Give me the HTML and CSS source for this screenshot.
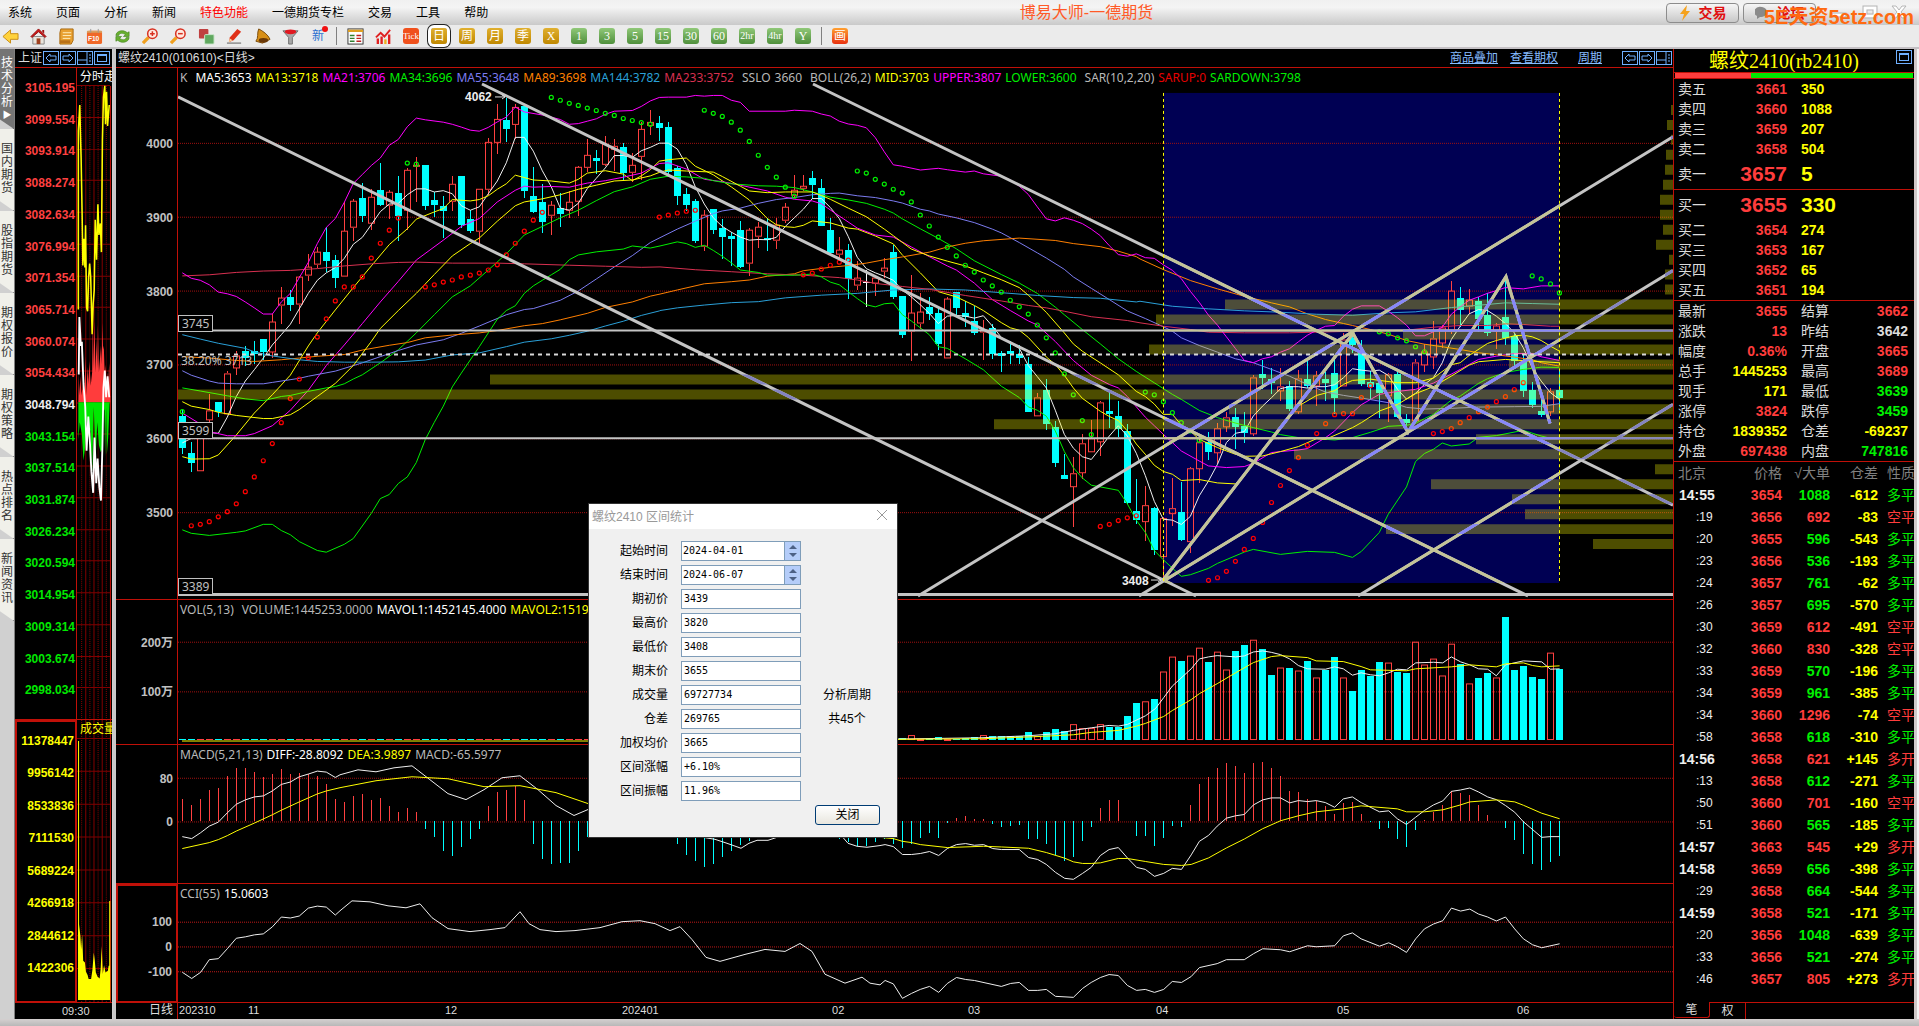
FILE: index.html
```html
<!DOCTYPE html>
<html lang="zh-CN">
<head>
<meta charset="utf-8">
<title>博易大师-一德期货</title>
<link rel="stylesheet" href="styles.css">
</head>
<body>
<header class="menubar">
  <nav class="menus">
    <button>系统</button><button>页面</button><button>分析</button><button>新闻</button><button class="hot">特色功能</button><button>一德期货专栏</button><button>交易</button><button>工具</button><button>帮助</button>
  </nav>
  <h1 class="app-title">博易大师-一德期货</h1>
  <div class="head-actions">
    <button class="pill"><svg width="12" height="16" viewBox="0 0 12 16"><path d="M8 0L1 9h4L3 16l8-10H7z" fill="#f5a21c"/></svg>交易</button>
    <button class="pill"><svg width="14" height="14" viewBox="0 0 14 14"><path d="M7 1a6 5 0 1 1-2 10l-3 2v-3a6 5 0 0 1 5-9z" fill="#8a8a8a"/></svg>论坛</button>
    <svg class="win" width="84" height="20" viewBox="0 0 84 20" fill="none" stroke="#fff" stroke-width="3"><path d="M5 12h12"/><rect x="37" y="5" width="10" height="8"/><path d="M66 3l10 11M76 3L66 14"/><g stroke="#b5b5b5" stroke-width="1"><rect x="4" y="10" width="14" height="4"/><rect x="35" y="3" width="14" height="12"/><rect x="39" y="7" width="6" height="4"/><path d="M64 3h4l3 4 3-4h4l-5 6 5 6h-4l-3-4-3 4h-4l5-6z"/></g></svg>
    <span class="mark">5E天资5etz.com</span>
  </div>
</header>

<div class="toolbar">
  <button aria-label="返回"><svg viewBox="0 0 18 18"><path d="M1 9l8-7v4h8v6H9v4z" fill="#ffd23c" stroke="#c88a10"/></svg></button>
  <button aria-label="主页"><svg viewBox="0 0 18 18"><path d="M3 9h12v8H3z" fill="#e8e4dc" stroke="#888"/><path d="M1 9l8-8 8 8-1 1-7-6-7 6z" fill="#d01818" stroke="#901010"/><path d="M13 2h2v4l-2-2z" fill="#a01010"/><path d="M7 11h4v6H7z" fill="#a04020"/></svg></button>
  <button aria-label="资讯"><svg viewBox="0 0 18 18"><path d="M3 1h13v12l-2 4H2V5z" fill="#e8a030" stroke="#a86810"/><path d="M5 5h9M5 8h9M5 11h8" stroke="#fff0c0"/><path d="M2 13h11v3H2z" fill="#b87018"/></svg></button>
  <button aria-label="F10"><svg viewBox="0 0 18 18"><rect x="1" y="3" width="16" height="14" rx="2" fill="#f06828"/><path d="M1 5h16V3H1z" fill="#d8a060"/><path d="M5 1v4M13 1v4" stroke="#999"/><text x="2" y="14" class="f10">F10</text></svg></button>
  <button aria-label="刷新"><svg viewBox="0 0 18 18"><path d="M2 8c0-5 8-7 12-3l2-1v5h-6l2-2C9 5 6 5 5 8zM16 10c0 5-8 7-12 3l-2 1V9h6l-2 2c3 2 6 2 7-1z" fill="#68b030" stroke="#3c7c18" stroke-width=".6"/></svg></button>
  <button aria-label="放大"><svg viewBox="0 0 18 18"><path d="M7 10l-6 6" stroke="#f0a020" stroke-width="3.5"/><circle cx="11" cy="6" r="5" fill="#ffe8e0" stroke="#d83020" stroke-width="1.6"/><path d="M8.500 6h5M11 3.500v5" stroke="#d83020" stroke-width="1.6"/></svg></button>
  <button aria-label="缩小"><svg viewBox="0 0 18 18"><path d="M7 10l-6 6" stroke="#f0a020" stroke-width="3.5"/><circle cx="11" cy="6" r="5" fill="#ffe8e0" stroke="#d83020" stroke-width="1.6"/><path d="M8.500 6h5" stroke="#d83020" stroke-width="1.6"/></svg></button>
  <button aria-label="叠加"><svg viewBox="0 0 18 18"><rect x="1" y="1" width="10" height="10" rx="1" fill="#c04040"/><rect x="7" y="7" width="10" height="10" rx="1" fill="#60a860" stroke="#cfe8cf"/></svg></button>
  <button aria-label="画线"><svg viewBox="0 0 18 18"><path d="M3 15l1-5 8-9 4 3-8 9z" fill="#e03018"/><path d="M3 15l1-4 3 2z" fill="#f8d8a0"/><path d="M1 16h15" stroke="#888" stroke-width="1.5"/></svg></button>
  <button aria-label="预警"><svg viewBox="0 0 18 18"><path d="M5 1c4 2 10 6 12 11l-8 4-7-2c3-3 1-9 3-13z" fill="#d89018" stroke="#784808"/><ellipse cx="10" cy="13" rx="5" ry="2.500" fill="#6a3808"/></svg></button>
  <button aria-label="筛选"><svg viewBox="0 0 18 18"><path d="M1 3h16l-6 7v7H7v-7z" fill="#a8a8a8" stroke="#707070"/><ellipse cx="9" cy="4" rx="6" ry="2.500" fill="#e01820"/></svg></button>
  <button class="new" aria-label="新功能">新<i></i></button>
  <span class="sep"></span>
  <button aria-label="报价"><svg viewBox="0 0 18 18"><rect x="1" y="1" width="16" height="16" fill="#fff" stroke="#333"/><path d="M1 3h16" stroke="#e0a020" stroke-width="2.500"/><path d="M3 8h5M3 11h5M3 14h5" stroke="#308030" stroke-width="1.500"/><path d="M10 8h5M10 11h5M10 14h5" stroke="#c02020" stroke-width="1.500"/></svg></button>
  <button aria-label="走势"><svg viewBox="0 0 18 18"><path d="M3 11v6M7 9v8M15 7v10" stroke="#e02020" stroke-width="2.500"/><path d="M11 12v5" stroke="#f0b020" stroke-width="2.500"/><path d="M1 10l5-5 4 4 6-7" fill="none" stroke="#e02020" stroke-width="2"/></svg></button>
  <button class="per tick">Tick</button>
  <button class="per gold on">日</button><button class="per gold">周</button><button class="per gold">月</button><button class="per gold">季</button><button class="per gold">X</button>
  <button class="per green">1</button><button class="per green">3</button><button class="per green">5</button><button class="per green">15</button><button class="per green">30</button><button class="per green">60</button><button class="per green hr">2hr</button><button class="per green hr">4hr</button><button class="per green">Y</button>
  <span class="sep"></span>
  <button class="per draw">画</button>
</div>

<div class="workspace">
  <nav class="tabs">
    <a href="#" class="on">技术分析<small>▶</small></a><a href="#">国内期货</a><a href="#">股指期货</a><a href="#">期权报价</a><a href="#">期权策略</a><a href="#">热点排名</a><a href="#">新闻资讯</a>
  </nav>

  <section class="side">
    <div class="titlebar"><span class="name">上证</span><span class="boxes" data-boxes="lrsm"></span></div>
    <div class="side-grid">
      <div class="axis" data-axis="index"></div>
      <div class="pane" id="index"><span class="cut">分时走</span></div>
      <div class="axis framed yellow" data-axis="indexvol"></div>
      <div class="pane" id="indexvol"><span class="cut yellow">成交量</span></div>
    </div>
    <div class="side-time">09:30</div>
  </section>

  <main class="main">
    <div class="titlebar"><span>螺纹2410(010610)&lt;日线&gt;</span>
      <span class="links"><a href="#">商品叠加</a><a href="#">查看期权</a><a href="#" class="far">周期</a></span><span class="boxes" data-boxes="lrs"></span></div>
    <div class="grid">
      <div class="axis" data-axis="price"></div>
      <div class="pane" id="price"><p class="legend"><span class="wide">K</span><b class="w">MA5:3653</b><b class="y">MA13:3718</b><b class="m">MA21:3706</b><b class="g">MA34:3696</b><b class="s">MA55:3648</b><b class="o">MA89:3698</b><b class="u">MA144:3782</b><b class="c wide">MA233:3752</b><span>SSLO</span><span class="wide">3660</span><span>BOLL(26,2)</span><b class="y">MID:3703</b><b class="m">UPPER:3807</b><b class="g wide">LOWER:3600</b><span>SAR(10,2,20)</span><b class="r">SARUP:0</b><b class="g">SARDOWN:3798</b></p></div>
      <div class="axis" data-axis="vol"></div>
      <div class="pane" id="vol"><p class="legend"><span class="wide">VOL(5,13)</span><span>VOLUME:1445253.0000</span><b class="w">MAVOL1:1452145.4000</b><b class="y">MAVOL2:1519318.3846</b></p></div>
      <div class="axis" data-axis="macd"></div>
      <div class="pane" id="macd"><p class="legend"><span>MACD(5,21,13)</span><b class="w">DIFF:-28.8092</b><b class="y">DEA:3.9897</b><span>MACD:-65.5977</span></p></div>
      <div class="axis framed" data-axis="cci"></div>
      <div class="pane" id="cci"><p class="legend"><span>CCI(55)</span><b class="w">15.0603</b></p></div>
      <div class="kind">日线</div>
      <div class="dates" id="dates"></div>
    </div>
  </main>

  <aside class="quote">
    <h2>螺纹2410(rb2410)<span class="boxes" data-boxes="m"></span></h2>
    <div class="ratio"><i></i></div>
    <table class="book"><tbody>
      <tr><th>卖五</th><td class="r">3661</td><td class="y">350</td></tr>
      <tr><th>卖四</th><td class="r">3660</td><td class="y">1088</td></tr>
      <tr><th>卖三</th><td class="r">3659</td><td class="y">207</td></tr>
      <tr><th>卖二</th><td class="r">3658</td><td class="y">504</td></tr>
      <tr class="big"><th>卖一</th><td class="r">3657</td><td class="y">5</td></tr>
    </tbody></table>
    <table class="book"><tbody>
      <tr class="big"><th>买一</th><td class="r">3655</td><td class="y">330</td></tr>
      <tr><th>买二</th><td class="r">3654</td><td class="y">274</td></tr>
      <tr><th>买三</th><td class="r">3653</td><td class="y">167</td></tr>
      <tr><th>买四</th><td class="r">3652</td><td class="y">65</td></tr>
      <tr><th>买五</th><td class="r">3651</td><td class="y">194</td></tr>
    </tbody></table>
    <table class="stats"><tbody>
      <tr><th>最新</th><td class="r">3655</td><th>结算</th><td class="r">3662</td></tr>
      <tr><th>涨跌</th><td class="r">13</td><th>昨结</th><td>3642</td></tr>
      <tr><th>幅度</th><td class="r">0.36%</td><th>开盘</th><td class="r">3665</td></tr>
      <tr><th>总手</th><td class="y">1445253</td><th>最高</th><td class="r">3689</td></tr>
      <tr><th>现手</th><td class="y">171</td><th>最低</th><td class="g">3639</td></tr>
      <tr><th>涨停</th><td class="r">3824</td><th>跌停</th><td class="g">3459</td></tr>
      <tr><th>持仓</th><td class="y">1839352</td><th>仓差</th><td class="y">-69237</td></tr>
      <tr><th>外盘</th><td class="r">697438</td><th>内盘</th><td class="g">747816</td></tr>
    </tbody></table>
    <table class="trades"><thead><tr><th>北京</th><th>价格</th><th>√大单</th><th>仓差</th><th>性质</th></tr></thead><tbody id="trades"></tbody></table>
    <div class="foot-tabs"><button class="on">笔</button><button>权</button></div>
  </aside>
  <div class="edge"></div>

  <form class="dialog" role="dialog" aria-label="螺纹2410 区间统计">
    <div class="dlg-title">螺纹2410 区间统计<button type="button" class="x" aria-label="退出"><svg width="12" height="12" viewBox="0 0 12 12"><path d="M1 1l10 10M11 1L1 11" stroke="#999"/></svg></button></div>
    <div class="dlg-body">
      <div class="fields">
        <label for="f0">起始时间</label><span class="spin"><input id="f0" value="2024-04-01"><button type="button" aria-label="调整起始时间"><svg width="8" height="14" viewBox="0 0 8 14"><path d="M0 5l4-4 4 4zM0 9l4 4 4-4z" fill="#4d6185"/></svg></button></span>
        <label for="f1">结束时间</label><span class="spin"><input id="f1" value="2024-06-07"><button type="button" aria-label="调整结束时间"><svg width="8" height="14" viewBox="0 0 8 14"><path d="M0 5l4-4 4 4zM0 9l4 4 4-4z" fill="#4d6185"/></svg></button></span>
        <label for="f2">期初价</label><input id="f2" value="3439">
        <label for="f3">最高价</label><input id="f3" value="3820">
        <label for="f4">最低价</label><input id="f4" value="3408">
        <label for="f5">期末价</label><input id="f5" value="3655">
        <label for="f6">成交量</label><input id="f6" value="69727734">
        <label for="f7">仓差</label><input id="f7" value="269765">
        <label for="f8">加权均价</label><input id="f8" value="3665">
        <label for="f9">区间涨幅</label><input id="f9" value="+6.10%">
        <label for="f10">区间振幅</label><input id="f10" value="11.96%">
      </div>
      <div class="period"><p>分析周期</p><p>共45个</p><button type="button">关闭</button></div>
    </div>
  </form>
</div>
<footer class="status"></footer>
<script src="charts.js"></script>
</body>
</html>
```
FILE: styles.css
```css
* { box-sizing: border-box; }
body { margin: 0; height: 100vh; min-height: 700px; display: flex; flex-direction: column; overflow: hidden; background: #cfcfcf; font: 12px/16px "Liberation Sans", "Noto Sans CJK SC", sans-serif; color: #000; }
button { font: inherit; color: inherit; background: none; border: 0; padding: 0; margin: 0; }
p, h1, h2 { margin: 0; font-weight: normal; }
table { border-collapse: collapse; width: 100%; table-layout: fixed; }
th, td { padding: 0; font-weight: normal; }

.menubar { height: 25px; flex: none; display: flex; align-items: center; padding: 0 5px 0 8px; background: linear-gradient(#f0f0f0, #f4f4f4 30%, #c9c9c9); }
.menus { display: flex; gap: 24px; flex: 4; }
.hot { color: #f00; }
.app-title { font-size: 16px; line-height: 24px; color: #ff5a28; }
.head-actions { flex: 3; position: relative; display: flex; justify-content: flex-end; align-items: center; gap: 4px; padding-right: 2px; }
.pill { width: 73px; height: 20px; border: 1px solid #8c8c8c; border-radius: 4px; background: linear-gradient(#f6f6f6, #c8c8c8); color: #e01010; font-weight: bold; font-size: 14px; display: flex; align-items: center; justify-content: center; gap: 8px; }
.win { margin-left: 8px; }
.mark { position: absolute; right: 0; top: 2px; font-size: 20px; line-height: 24px; font-weight: bold; color: #ff6a10; }

.toolbar { height: 24px; flex: none; display: flex; align-items: center; gap: 8px; background: #ebebeb; border-bottom: 2px solid #c4c0c4; }
.toolbar button { width: 20px; height: 20px; display: flex; align-items: center; justify-content: center; flex: none; }
.toolbar svg { width: 17px; height: 17px; }
.f10 { font: bold 7px "Liberation Sans", sans-serif; fill: #fff; }
.toolbar .new { position: relative; color: #2a6fd0; }
.new i { position: absolute; right: 0; top: 0; width: 6px; height: 6px; border-radius: 3px; background: #f01010; }
.sep { width: 1px; height: 18px; background: #808080; }
.toolbar .per { width: 16px; height: 16px; margin: 0 2px; border-radius: 3px; color: #fff; font: 12px/16px "Liberation Serif", "Noto Sans CJK SC", serif; }
.toolbar .gold { background: linear-gradient(#e0b030, #c08800); }
.toolbar .green { background: linear-gradient(#90c878, #4f8f3c); }
.toolbar .tick { background: #f0501c; font-size: 9px; }
.toolbar .draw { background: linear-gradient(#ffa030, #e83010); }
.toolbar .hr { font-size: 10px; }
.toolbar .on { box-shadow: 0 0 0 3px #fff, 0 0 0 4px #222; }

.workspace { flex: 1; min-height: 0; display: flex; position: relative; }
.tabs { width: 15px; flex: none; background: #d0d0d0; border-right: 1px solid #808080; display: flex; flex-direction: column; }
.tabs a { height: 82px; padding: 14px 1px 0; font-size: 12px; line-height: 13px; color: #333; text-decoration: none; word-break: break-all; background: #f0f0ea; border-bottom: 1px solid #666; clip-path: polygon(0 0, 100% 0, 100% 100%, 0 88%); }
.tabs .on { height: 80px; padding-top: 8px; background: #747474; color: #fff; }
.tabs small { display: block; font-size: 9px; text-align: center; }

.titlebar { height: 19px; flex: none; display: flex; align-items: center; border-bottom: 1px solid #c01008; color: #dcdcdc; overflow: hidden; white-space: nowrap; }
.boxes { display: flex; gap: 1px; }
.boxes svg { display: block; }
.side { width: 97px; flex: none; background: #000; display: flex; flex-direction: column; }
.side .titlebar { padding: 0 2px 0 3px; }
.side .boxes { flex: 1; justify-content: flex-end; }
.side-grid { flex: 1; min-height: 0; display: grid; grid-template: 652fr 283fr / 62px 1fr; }
.side-time { height: 16px; flex: none; padding-left: 47px; color: #ddd; font-size: 11px; }
.cut { padding: 1px 0 0 3px; overflow: hidden; white-space: nowrap; color: #fff; }

.main { flex: 1; min-width: 0; margin-left: 4px; background: #000; display: flex; flex-direction: column; box-shadow: -3px 0 0 #c8c8c8; }
.main .titlebar { padding: 0 1px 0 2px; }
.links { margin-left: auto; display: flex; gap: 12px; padding-right: 20px; }
.links a { color: #86bcff; }
.links .far { margin-left: 8px; }
.grid { flex: 1; min-height: 0; display: grid; grid-template: minmax(0, 532fr) minmax(0, 145fr) minmax(0, 139fr) minmax(0, 119fr) 16px / 62px 1fr; }
.axis, .pane { min-width: 0; min-height: 0; border-bottom: 1px solid #c01008; }
.axis { position: relative; border-right: 1px solid #c01008; color: #c0c0c0; font: bold 12px/16px "Liberation Sans", "Noto Sans CJK SC", sans-serif; }
.axis span { position: absolute; right: 4px; margin-top: -8px; }
.side .axis span { right: 1px; }
.side .axis { color: #ff4040; }
.axis.framed { border: 2px solid #c01008; }
.side .axis.yellow { color: #ff0; }
.axis .g { color: #00e800; }
.axis .w { color: #eee; }
.pane { position: relative; display: grid; }
.pane > * { grid-area: 1 / 1; min-width: 0; min-height: 0; }
.pane svg { width: 100%; height: 100%; display: block; overflow: hidden; }
.pane .legend, .pane .cut { z-index: 1; }
.side .cut.yellow { color: #ff0; }
.legend { display: flex; gap: 4px; padding: 2px 2px 0; height: 18px; white-space: nowrap; font: 12px/16px "Noto Sans", sans-serif; color: #b8b8b8; }
.legend b { font-weight: normal; }
.legend .wide { margin-right: 4px; }
.note { position: absolute; margin-top: -8px; font: 12px/16px "Noto Sans", sans-serif; color: #c0c0c0; z-index: 1; white-space: nowrap; }
.note.box { border: 1px solid #c0c0c0; background: #000; padding: 0 3px; line-height: 15px; margin-top: 0; }
.note.strong { font: bold 12px/16px "Liberation Sans", sans-serif; color: #eee; }
.kind { color: #ddd; text-align: right; padding-right: 4px; border-right: 1px solid #c01008; line-height: 15px; }
.dates { position: relative; color: #ddd; font-size: 11px; line-height: 15px; }
.dates span { position: absolute; }

.w { color: #fff; } .y { color: #ff0; } .m { color: #f0f; } .g { color: #00f000; } .r { color: #ff3c3c; }
.s { color: #7b7bf0; } .o { color: #ff8000; } .u { color: #2aa0d8; } .c { color: #d83050; }
.legend .r { color: #e80000; }

.quote { width: 241px; flex: none; background: #000; border-left: 1px solid #c01008; display: flex; flex-direction: column; color: #dcdcdc; }
.quote h2 { height: 23px; flex: none; display: flex; color: #ff0; font: 20px/25px "Liberation Serif", "Noto Sans CJK SC", serif; padding-left: 35px; }
.quote .boxes { margin: 1px 2px 0 auto; }
.ratio { height: 7px; flex: none; border: solid #c01008; border-width: 1px 0; padding: 0 1px; background: #000; }
.ratio i { display: block; height: 5px; background: linear-gradient(90deg, #ff3c3c 32%, #00e800 32%); }
.quote table { flex: none; border-bottom: 1px solid #c01008; font-size: 14px; line-height: 20px; }
.quote tr { height: 20px; }
.quote th { text-align: left; padding-left: 4px; }
.quote td { font-weight: bold; text-align: right; }
.book th { width: 48px; }
.book td:nth-child(2) { width: 65px; }
.book td:nth-child(3) { text-align: left; padding-left: 14px; }
.book .big { height: 30px; }
.book .big td { font-size: 21px; }
.stats th { width: 53px; }
.stats td { width: 60px; }
.stats th:nth-child(3) { padding-left: 14px; }
.stats td:last-child { width: 74px; padding-right: 6px; }
.quote .trades { border: 0; }
.quote .trades tr { height: 22px; }
.trades thead th { color: #808080; text-align: right; padding: 0; width: 48px; }
.trades thead th:first-child { text-align: left; padding-left: 4px; width: 60px; }
.trades thead th:last-child { width: 37px; }
.trades td:first-child { text-align: left; padding-left: 5px; color: #eee; }
.trades .sec td:first-child { font-weight: normal; font-size: 12px; padding-left: 22px; }
.trades td:last-child { font-weight: normal; }
.foot-tabs { margin-top: auto; height: 17px; flex: none; border-top: 1px solid #c01008; display: flex; }
.foot-tabs button { width: 36px; height: 16px; border-right: 1px solid #c01008; }
.foot-tabs .on { background: #000; margin-top: -1px; border-bottom: 1px solid #c01008; border-radius: 0 0 3px 3px; }
.edge { width: 5px; flex: none; background: linear-gradient(90deg, #cfc8c8 60%, #f4f4f4 60%); }

.dialog { position: absolute; left: 589px; top: 455px; width: 308px; background: #f0f0f0; z-index: 3; outline: 1px solid #333; }
.dlg-title { height: 25px; background: #fff; color: #999; padding: 0 9px 0 3px; display: flex; justify-content: space-between; align-items: center; }
.dlg-body { display: flex; align-items: flex-start; padding: 12px 16px 12px 18px; }
.fields { display: grid; grid-template-columns: 61px 120px; grid-auto-rows: 20px; gap: 4px 13px; align-items: center; text-align: right; }
.fields input { width: 120px; height: 20px; border: 1px solid #7f9db9; background: #fff; padding: 0 2px 2px; font: 10px/16px "DejaVu Sans Mono", monospace; color: #000; }
.spin { display: flex; width: 120px; border: 1px solid #7f9db9; }
.fields .spin input { flex: 1; width: 0; height: 18px; border: 0; padding: 0 1px 1px; }
.spin button { width: 16px; height: 18px; background: #b5cdf9; border-left: 1px solid #7f9db9; display: flex; align-items: center; justify-content: center; }
.period { flex: 1; display: flex; flex-direction: column; text-align: center; padding: 144px 0 0 14px; }
.period p { line-height: 24px; margin-top: -2px; padding-bottom: 2px; padding-right: 2px; }
.period button { height: 20px; width: 65px; margin-top: 72px; border: 1px solid #003c74; border-radius: 3px; background: linear-gradient(#fff, #e8e6de); }
.status { height: 7px; flex: none; background: linear-gradient(#d4d0d0, #b8b8b8); }
```
FILE: charts.js
```js
// Drawing units of the panes: x runs 178..1673, y runs 68..1003 from the price pane down to CCI.
const A = { x0: 170, y0: 70, kx: 3, ky: 2.904 };
const B = { x0: 660, y0: 70, kx: 3, ky: 2.904 };
const C = { x0: 1140, y0: 80, kx: 2.904, ky: 3 };
const L = { x0: 0, y0: 600, kx: 3, ky: 3 };
const R = { x0: 880, y0: 590, kx: 1.96, ky: 3 };
const P = { x0: 0, y0: 0, kx: 1, ky: 1 };
const T = { x0: 0, y0: 40, kx: 3, ky: 2.613 };
const RED = '#ff4040', CYAN = '#00ffff', FRAME = '#c01008';

const pairs = s => s.trim().split(/\s+/).map(p => p.split(',').map(Number));
const map = (f, s) => pairs(s).map(([x, y]) => [(f.x0 + x / f.kx).toFixed(1), (f.y0 + y / f.ky).toFixed(1)]);
const track = (...parts) => { let out = []; for (let i = 0; i < parts.length; i += 2) out = out.concat(map(parts[i], parts[i + 1])); return out.join(' '); };
const line = (color, pts, w = 1) => `<polyline points="${pts}" fill="none" stroke="${color}" stroke-width="${w}"/>`;
const seg = (x1, y1, x2, y2, color, extra = '') => `<path d="M${x1} ${y1}L${x2} ${y2}" stroke="${color}" ${extra}/>`;
const rect = (x, y, w, h, fill, extra = '') => `<rect x="${x}" y="${y}" width="${w}" height="${h}" fill="${fill}" ${extra}/>`;
const mount = (id, box, body) => document.getElementById(id).insertAdjacentHTML('afterbegin', `<svg viewBox="${box}" preserveAspectRatio="none">${body}</svg>`);
const hgrid = (ys, color) => ys.map(y => seg(178, y, 1673, y, color, 'stroke-dasharray="1 1" shape-rendering="crispEdges"')).join('');

// Candles: direction, body top, body bottom, high, low
const candles = [
[A, `c1008,1100,990,1117 c1115,1143,1084,1170 r1040,1168,1040,1168 r990,1020,945,1025 c967,996,967,1010 r884,1003,877,1003 r831,869,820,889 c820,838,804,862 c818,828,790,858 c784,822,784,845
r733,823,710,838 r661,686,630,738 c659,681,640,699 r602,681,598,738 r573,597,534,612 r529,565,514,575 c528,554,457,588 c552,604,537,632 r468,602,384,602 r381,460,375,497
c372,424,328,441 r370,448,347,466 c348,391,270,396 r354,395,348,433 c357,424,308,498 r291,410,285,466 r276,283,253,383 c276,395,276,407 c377,391,355,427 c396,409,366,488
r332,382,308,409 c308,450,308,458 c433,467,408,472 r346,471,346,505 r210,349,198,362 r143,213,100,244 c145,171,82,209 r106,161,98,200 c105,350,100,371 c366,411,282,415
c383,441,331,472 r391,425,380,479 c402,417,357,456 r384,409,350,430 r283,384,278,424 r248,284,200,296 c256,264,232,302 r215,275,192,278 r222,233,200,293 c224,298,212,320
r275,298,241,325 r172,254,150,320 r152,163,116,188 c154,167,134,206 c165,297,152,305`],
[B, `c285,366,280,392 c360,392,343,410 c379,498,375,502 r422,515,407,525 c404,466,404,475 c459,486,433,549 c482,490,470,569 c465,572,438,575 r465,562,460,597 r457,484,442,516
c487,495,430,525 r450,498,430,519 r399,439,387,445 r349,365,305,372 r338,345,305,352 c314,333,293,375 c343,453,317,453 c465,530,430,530 r524,536,485,548 c523,608,505,664
r605,628,556,638 w616,619,580,688 r603,622,603,655 r576,588,545,605 c528,658,508,664 c656,772,656,780 r707,762,595,848 r704,739,648,752 c688,708,660,725 c706,798,690,816
r664,838,660,838 c645,690,645,712 c706,718,670,745 c730,763,686,772 r754,765,727,845 c750,828,738,841 c825,832,820,880 c819,829,789,858 c828,838,802,858 c857,995,837,997
r953,1009,941,1009 c932,1030,900,1047 c1040,1143,1022,1156 c1179,1190,1118,1190 r1174,1213,1127,1330 r1087,1174,1060,1192 r1071,1111,1020,1111 r968,1082,964,1124 c993,1001,938,1042 c1008,1045,964,1068
c1051,1260,1031,1263 c1284,1309,1192,1321 r1267,1316,1210,1372 c1275,1397,1273,1410 r1305,1418,1300,1483`],
[C, `r1288,1306,1198,1341 c1299,1383,1209,1386 r1168,1390,1164,1421 r1090,1171,1078,1211 c1090,1118,1059,1142 r1048,1123,1032,1155 r1015,1045,998,1058 c1014,1043,988,1109 c1040,1061,999,1091 r895,1066,889,1072
c885,896,843,930 c900,912,866,945 r922,937,868,966 c922,990,905,995 r898,998,872,1005 c900,922,843,926 r888,920,877,980 c900,912,880,966 c882,957,837,1006 r780,920,760,920
c776,798,762,822 c822,915,783,920 c908,925,875,960 c912,942,905,1018 r885,950,882,1028 c885,1013,872,1017 c1019,1032,1006,1062 r850,1025,840,1025 r815,857,795,878 r778,835,723,869
r745,792,735,806 r633,757,603,762 c654,690,620,740 r660,680,627,702 c663,717,650,757 c705,758,640,772 r738,757,728,810 c711,777,588,797 c770,845,762,860 c848,936,825,955
c933,978,909,987 c996,1007,960,1014 r935,998,928,1010 c933,957,876,994`]
].flatMap(([f, s]) => s.split(/\s+/).map(t => {
  const [a, b, h, l] = t.slice(1).split(',').map(v => Math.round(f.y0 + v / f.ky));
  return { k: t[0], a, b: Math.max(b, a + 1), h, l };
}));
const cx = i => 182 + 9 * i;
const candleSvg = candles.map((c, i) => {
  const x = cx(i);
  if (c.k === 'w') return rect(x, c.h, 1, c.l - c.h, '#fff') + rect(x - 3, c.a, 7, 1, '#fff');
  if (c.k === 'c') return rect(x, c.h, 1, c.l - c.h, CYAN) + rect(x - 3, c.a, 7, c.b - c.a, CYAN);
  return rect(x, c.h, 1, Math.max(0, c.a - c.h), RED) + rect(x, c.b, 1, Math.max(0, c.l - c.b), RED) +
    `<rect x="${x - 2.5}" y="${c.a + .5}" width="6" height="${Math.max(1, c.b - c.a - 1)}" fill="none" stroke="${RED}"/>`;
}).join('');

const averages = [
line('#f0f0f0', track(A, `37,1085 64,1072 91,1064 118,1055 145,1057 172,1010 199,950 226,905 253,872 280,838 307,800 334,770 361,740 388,695 415,650 442,612 469,590 496,575 523,548 550,507 577,487 604,450 631,412 658,390 685,388 712,363 739,346 766,346 793,355 820,351 847,360 874,395 901,408 928,398 955,360 982,323 1009,270 1036,196 1063,196 1090,236 1117,293 1144,340 1171,402 1198,408 1225,388 1252,345 1279,315 1306,285 1333,249 1360,249 1387,254 1414,235 1441,225 1468,213 1495,213`,
B, `52,230 79,275 106,340 133,390 160,430 187,455 214,472 241,486 268,495 295,493 322,494 349,487 376,455 403,430 430,405 457,374 484,374 511,400 538,432 565,485 592,545 619,578 646,590 673,600 700,612 727,640 754,660 781,683 808,708 835,738 862,716 889,714 916,716 943,722 970,715 997,745 1024,778 1051,795 1078,810 1105,860 1132,892 1159,925 1186,990 1213,1060 1240,1100 1267,1125 1294,1133 1321,1100 1348,1065 1375,1035 1402,1065 1429,1115 1456,1180 1483,1255 1510,1307`,
C, `94,1323 120,1336 146,1312 172,1250 199,1205 225,1155 251,1090 277,1062 303,1057 329,1010 356,980 382,955 408,928 434,922 460,922 486,926 513,922 539,922 565,916 591,895 617,868 643,872 669,875 695,872 721,888 748,930 774,959 800,942 826,915 852,895 878,850 904,780 930,740 956,703 983,690 1009,693 1035,710 1061,732 1087,760 1113,805 1139,865 1165,905 1192,940 1218,960`)),
line('#ff0', track(A, `37,1125 64,1132 118,1131 145,1120 199,1062 253,998 307,945 361,888 415,803 442,765 496,698 550,633 604,570 658,508 712,462 739,434 793,413 820,403 847,377 901,381 928,377 955,366 982,347 1009,331 1036,306 1090,320 1144,323 1198,329 1225,318 1252,300 1306,293 1360,303 1387,322 1414,308 1441,290 1468,265 1495,261`,
B, `79,256 106,280 160,305 214,340 268,378 322,432 349,450 376,456 403,458 430,452 457,439 511,445 565,460 592,463 646,483 700,506 727,538 781,590 835,645 889,660 943,685 970,700 1024,735 1051,750 1078,757 1105,778 1159,835 1186,857 1213,888 1240,925 1267,955 1321,993 1348,1008 1375,1020 1402,1050 1429,1088 1456,1118 1483,1150 1510,1168`,
C, `94,1185 120,1204 172,1201 225,1211 277,1214 303,1190 329,1152 356,1110 408,1050 434,1015 460,980 513,948 565,934 591,915 617,903 669,899 695,903 748,910 800,910 852,896 904,856 930,850 956,828 1009,792 1035,783 1087,769 1113,767 1139,772 1165,783 1192,800 1218,815`)),
line('#f0f', track(A, `37,998 91,1030 118,1052 172,1064 226,1064 253,1058 307,1035 361,990 415,932 469,860 523,800 577,738 631,675 685,615 739,553 820,495 874,455 928,432 982,384 1036,350 1063,338 1090,341 1144,339 1198,341 1252,329 1306,322 1360,312 1414,300 1468,272 1495,270`,
B, `79,288 133,318 187,325 241,335 322,352 376,370 403,376 457,381 484,389 538,425 592,460 646,480 700,486 754,515 808,543 862,570 889,582 943,620 997,668 1051,700 1105,730 1132,742 1186,790 1240,845 1294,888 1348,915 1375,925 1402,950 1456,1010 1483,1035 1510,1060`,
C, `94,1090 120,1115 172,1145 199,1160 251,1165 303,1162 329,1152 382,1120 408,1117 460,1112 486,1108 539,1075 565,1055 617,1000 643,976 695,945 748,936 800,930 852,911 904,884 930,870 983,840 1035,830 1087,822 1139,822 1165,832 1218,843`)),
line('#00f000', track(A, `37,925 91,934 172,948 226,957 280,962 334,950 361,947 415,935 469,925 496,921 523,913 550,899 577,887 631,852 685,814 739,765 793,712 847,660 901,628 955,582 1009,535 1063,480 1117,455 1171,430 1225,408 1279,380 1333,354 1387,340 1441,318 1495,309`,
B, `79,311 133,315 160,322 214,331 295,337 349,338 403,342 457,355 511,370 565,378 619,388 673,405 700,416 727,433 781,462 835,490 889,520 943,555 1024,595 1078,620 1132,650 1186,690 1213,712 1267,755 1321,797 1375,840 1429,877 1483,910`,
C, `94,945 120,960 172,993 225,1015 277,1031 329,1045 382,1058 408,1066 460,1075 513,1078 565,1082 617,1075 669,1059 721,1041 774,1038 800,1032 826,1018 852,1005 904,962 930,950 983,912 1009,898 1061,879 1113,870 1165,863 1218,864`)),
line('#7b7bf0', track(A, `37,875 64,888 118,905 145,911 199,913 280,913 307,909 388,897 415,891 496,876 577,852 631,834 685,816 739,800 820,785 874,766 928,745 1009,712 1063,697 1090,694 1144,678 1171,670 1225,643 1279,608 1333,573 1387,540 1441,502`,
B, `0,488 52,463 106,440 160,418 187,410 241,402 295,388 349,377 403,371 457,363 511,359 538,358 592,366 646,371 700,381 727,387 781,405 808,410 835,419 889,430 943,444 997,463 1024,474 1078,502 1132,532 1159,547 1213,580 1240,602 1294,635 1348,668 1402,701 1456,723 1510,747`,
C, `94,755 120,775 172,798 225,818 277,838 329,850 382,870 434,890 486,915 539,938 591,948 643,956 695,965 748,975 774,984 826,989 904,987 983,983 1087,982 1165,981 1218,973`)),
line('#ff8000', track(A, `37,834 118,838 199,845 253,848 334,843 388,838 442,833 523,828 577,815 658,801 712,793 766,779 847,771 928,765 982,758 1063,744 1117,738 1171,727 1252,708 1306,691 1387,675 1441,658`,
B, `0,652 52,640 133,622 214,616 268,611 322,600 403,593 430,584 511,574 565,569 619,562 673,552 727,544 808,530 862,515 916,504 970,497 1078,489 1186,496 1240,505 1321,514 1375,527 1429,543`,
C, `0,538 68,570 147,603 225,628 303,650 382,670 434,682 486,703 539,720 591,732 617,738 669,750 721,764 774,783 826,794 878,802 930,810 983,820 1035,826 1087,833 1139,841 1165,850 1218,860`)),
line('#2aa0d8', track(A, `37,770 91,783 145,795 226,810 253,820 307,832 388,843 442,848 523,850 604,850 685,849 766,844 847,829 928,823 1009,805 1063,792 1144,782 1198,772 1252,760 1306,745 1360,731 1414,714 1468,701`,
B, `0,700 52,692 133,684 214,677 295,674 376,663 484,655 592,650 700,640 808,637 916,640 1024,648 1132,656 1240,662 1321,664 1429,675`,
C, `0,665 94,680 199,688 303,694 408,698 513,704 617,707 721,700 800,697 904,684 983,677 1061,670 1139,672 1218,674`)),
line('#d83050', track(A, `37,599 118,596 199,589 280,585 361,583 442,578 523,570 604,564 685,560 739,559 847,562 982,562 1063,564 1198,568 1306,571 1414,574`,
B, `0,573 106,581 214,587 322,593 430,597 538,604 592,611 646,621 727,630 808,638 916,656 1024,672 1105,685 1159,692 1213,702 1294,718 1402,729`,
C, `0,730 68,740 147,750 199,758 303,760 434,760 591,756 695,754 774,752 852,743 930,738 1009,738 1061,733 1113,735 1192,740 1218,740`)),
line('#f0f', track(A, `37,590 64,606 91,612 118,625 145,646 172,651 199,659 226,675 253,692 280,710 307,710 334,675 361,650 388,604 415,560 442,505 469,458 496,432 523,385 550,330 577,304 604,278 631,256 658,219 685,202 712,165 739,140 766,145 820,152 847,158 874,166 901,175 928,178 955,167 982,151 1009,137 1036,108 1063,122 1117,131 1144,137 1171,144 1198,158 1225,156 1252,149 1279,142 1306,129 1333,120 1387,118 1414,106 1441,90 1468,80 1495,79`,
B, `79,79 106,74 133,76 160,74 187,74 214,88 241,94 268,120 376,120 403,117 457,120 484,128 511,134 538,149 565,157 592,161 619,168 646,197 673,238 700,276 727,280 781,291 835,286 862,290 916,297 943,294 970,302 1024,309 1051,320 1078,338 1105,362 1132,398 1159,433 1186,439 1213,430 1240,437 1267,447 1294,463 1321,482 1348,511 1375,537 1402,542 1429,535 1456,546 1483,548 1510,567`,
C, `94,572 120,597 146,635 172,668 199,707 225,737 251,772 277,807 303,843 329,850 356,838 382,832 408,818 434,808 460,787 486,767 513,752 539,740 565,738 591,710 617,689 643,679 695,679 721,695 748,715 774,737 800,769 826,769 852,757 878,743 904,704 930,682 956,662 983,652 1009,641 1035,633 1061,624 1113,628 1165,619 1218,619`)),
line('#ff0', track(A, `37,965 64,978 118,988 145,996 199,1005 280,1014 307,1014 361,1003 388,988 442,950 496,912 550,860 604,790 631,752 685,700 739,650 793,595 847,541 901,505 928,489 982,440 1036,395 1063,384 1117,375 1171,363 1225,347 1279,335 1333,323 1387,320 1441,308 1468,298 1495,291`,
B, `79,294 160,297 187,310 241,338 268,352 322,357 376,355 457,355 484,365 511,376 565,402 619,427 673,463 700,482 754,521 808,541 862,556 916,570 970,590 1024,610 1078,633 1105,655 1159,705 1213,765 1240,797 1267,818 1321,852 1375,887 1429,935 1456,950 1483,972 1510,1002`,
C, `94,1005 120,1037 146,1055 172,1080 225,1105 277,1125 303,1131 356,1130 408,1117 460,1102 513,1078 539,1080 617,1045 643,1030 695,995 748,975 800,943 852,922 904,890 956,857 983,847 1061,840 1139,845 1218,850`)),
line('#00f000', track(A, `37,1338 64,1348 118,1354 199,1345 226,1341 280,1322 307,1322 334,1340 361,1352 388,1372 442,1398 469,1403 523,1380 550,1363 604,1290 631,1247 658,1235 685,1203 712,1184 739,1142 766,1075 793,1025 820,978 847,922 874,882 928,805 955,765 982,725 1009,700 1036,686 1063,650 1090,628 1117,612 1144,596 1171,580 1198,552 1225,538 1279,529 1360,521 1387,512 1441,518`,
B, `0,512 52,500 79,505 106,516 133,510 160,525 187,542 214,561 241,582 295,589 322,597 403,597 457,594 484,602 511,617 538,625 592,665 619,683 646,689 673,680 700,678 727,712 754,730 808,770 835,805 862,810 916,840 970,872 1024,920 1078,953 1105,980 1132,990 1159,1007 1186,1050 1213,1110 1240,1157 1267,1187 1294,1208 1375,1223 1402,1262 1429,1310 1456,1345 1483,1398 1510,1425`,
C, `120,1492 146,1487 199,1468 225,1453 303,1419 329,1411 408,1426 486,1417 565,1420 617,1435 643,1417 695,1360 721,1305 774,1223 800,1147 826,1123 852,1110 878,1091 904,1100 956,1094 983,1074 1035,1069 1113,1053 1165,1070 1192,1077 1218,1077`))
].join('');

const dots = (color, ...parts) => track(...parts).split(' ').map(p => { const [x, y] = p.split(','); return `<circle cx="${x}" cy="${y}" r="2" fill="none" stroke="${color}" stroke-width="1.2"/>`; }).join('');
const sar = dots('#00f000', A, `37,994 712,271 739,274 1144,80 1171,88 1198,97 1225,103 1252,111 1279,118 1306,126 1333,132 1360,141 1387,147 1414,153 1441,158`,
B, `133,117 160,126 187,135 214,152 241,175 268,208 295,248 322,283 349,312 376,341 403,367 592,294 619,300 646,318 673,332 700,347 727,358 754,384 781,422 808,454 835,486 862,516 889,541 916,568 943,588 970,611 997,628 1024,646 1051,670 1078,689 1105,710 1132,742 1159,779 1186,823 1213,884 1240,945 1267,1020 1294,1061 1456,937 1483,945`,
C, `68,967 94,1000 120,1030 146,1055 172,1083 695,757 721,763 748,775 774,784 800,802 826,817 1139,589 1165,598 1192,613 1218,640`) +
dots('#ff0000', A, `64,1326 91,1322 118,1314 145,1300 172,1285 199,1262 226,1227 253,1184 280,1137 307,1087 334,1026 361,956 388,899 415,837 442,777 469,724 496,672 523,631 550,631 577,602 604,547 631,504 658,466 685,431 766,631 793,625 820,617 847,611 874,602 901,597 928,591 955,582 982,567 1009,538 1036,504 1063,469 1090,437 1117,414 1468,428 1495,422`,
B, `52,416 79,411 106,408 430,596 457,591 484,579 511,568 538,559 565,553 1321,1328 1348,1322 1375,1311 1402,1303 1429,1297`,
C, `199,1504 225,1496 251,1477 277,1447 303,1411 329,1378 356,1330 382,1270 408,1219 434,1174 460,1135 486,1098 513,1063 539,1033 565,1006 591,1003 617,1003 643,955 669,919 852,1063 878,1057 904,1048 930,1030 956,1015 983,997 1009,983 1035,967 1061,952 1087,931 1113,910`);

// Volume profile: left end of each row; rows are 15 units apart
const rows = [1671,1667,1671,1666,1665,1663,1660,1660,1663,1656,1669,1665,1665,1225,1156,1403,1149,1509,490,178,1229,994,1476,1294,1655,1431,1512,1525,1386,1593];
const profile = rows.map((x, k) => `M${x} ${105 + 15 * k}H1673v10H${x}z`).join('');
const trend = 'M178 97L1196 597M482 84L1528 597M813 84L1673 506M918 597L1673 137M1139 597L1673 271M1358 597L1673 405M1163 581L1353 334L1408 433L1506 277L1550 424';
const levels = 'M178 331H1673M178 439H1673';
const strokes = c => `<g stroke="${c}" fill="none"><path d="${trend}" stroke-width="3"/><path d="${levels}" stroke-width="2"/></g>`;
mount('price', '178 68 1495 532', `<defs><clipPath id="sel"><path d="M1164 93H1560V584H1164z"/></clipPath><clipPath id="prof"><path d="${profile}"/></clipPath></defs>` +
  rect(1164, 93, 395, 491, '#000053') + hgrid([143.5, 217.5, 291.5, 365.5, 439.5, 513.5], '#a01010') +
  `<g shape-rendering="crispEdges">${candleSvg}</g>` + averages + sar +
  `<path d="${profile}" fill="rgba(255,255,0,.3)"/>` +
  strokes('#c4c4c4') + `<g clip-path="url(#sel)">${strokes('#c4c498')}</g><g clip-path="url(#prof)">${strokes('#8484c0')}<g clip-path="url(#sel)">${strokes('#8888fa')}</g></g>` +
  seg(178, 595.5, 1673, 595.5, '#c4c4c4', 'stroke-width="3"') +
  seg(178, 355, 1673, 355, '#d8d8d8', 'stroke-dasharray="4 4" stroke-width="2"') +
  seg(1163.5, 93, 1163.5, 584, '#ff0', 'stroke-dasharray="3 3"') + seg(1559.5, 93, 1559.5, 584, '#ff0', 'stroke-dasharray="3 3"') +
  '<path d="M495 97h10m-3 -2l3 2l-3 2M1151 581h10m-3 -2l3 2l-3 2" stroke="#ddd" fill="none"/>');

const volTops = [447,439,450,450,444,450,450,447,444,439,441,442,441,441,429,441,429,420,426,404,416,416,406,414,414,381,342,337,330,247,202,213,199,175,216,187,241,183,165,151,177,258,235,234,244,213,265,239,201,265,306,240,261,216,220,245,252,157,226,208,259,163,222,283,267,252,265,81,240,228,264,270,190,237];
mount('vol', '178 600 1495 145', hgrid([642.5, 692.5], '#a01010') +
line('#ff0', track(P, '182,742 897,742')) + '<g shape-rendering="crispEdges">' + candles.map((c, i) => {
  const x = cx(i) - 3, color = c.k === 'r' ? RED : CYAN;
  if (i < 80) return rect(x, 740, 7, 1, color);
  const y = Math.round(590 + volTops[i - 80] / 3);
  return c.k === 'r' ? `<rect x="${x + .5}" y="${y + .5}" width="6" height="${Math.max(1, 740 - y)}" fill="none" stroke="${color}"/>` : rect(x, y, 7, 741 - y, color);
}).join('') + '</g>' +
line('#f0f0f0', track(R, `34,450 200,446 290,440 343,434 379,424 414,416 449,409 467,411 485,406 520,380 540,358 556,325 573,290 610,238 626,208 644,202 661,198 697,202 714,199 732,187 750,184 767,188 785,195 803,208 820,228 838,238 873,239 891,232 908,238 926,257 943,250 961,256 979,259 997,250 1014,239 1032,241 1050,220 1085,218 1103,220 1120,202 1138,217 1156,226 1173,238 1191,239 1208,259 1226,226 1261,214 1297,217 1314,239 1332,238`)) +
line('#ff0', track(R, `34,451 200,449 300,443 379,437 414,430 467,424 503,411 520,403 556,382 573,364 610,331 626,313 661,283 697,250 732,219 767,201 785,198 838,204 855,214 908,216 943,231 961,241 1032,244 1050,238 1120,232 1156,226 1208,232 1226,223 1261,220 1279,228 1297,232 1332,229`)));

const hist = [799,805,799,790,788,776,768,768,772,777,774,769,774,773,774,776,784,799,802,796,794,800,798,806,812,808,812,830,838,852,857,848,840,830,806,792,790,786,800,845,860,865,864,864,852,838,830,812,808,800,806,812,818,826,834,845,856,862,868,865,858,852,846,842,836,830,826,824,826,828,830,834,838,840,843,847,847,843,840,845]
  .concat([777,765,747,732,747,702,687,681,690,690,705,714,711,708,750,750,765,798,816,804,756,714,654,630,630,697,741,741,771,747,711,714,645,582,561,534,519,528,549,519,516,534,558,603,606,627,633,648,675,640,636,675,699,720,717,750,774,723,692,665,645,604,609,615,645,678,696,717,753,795,825,843,819,801].map(v => Math.round(590 + v / 3)));
mount('macd', '178 745 1495 139', hgrid([778.5, 822.5], '#a01010') + '<g shape-rendering="crispEdges">' +
  hist.map((y, i) => y < 822 ? rect(cx(i), y, 1, 822 - y, RED) : rect(cx(i), 822, 1, y - 822, CYAN)).join('') + '</g>' +
line('#f0f0f0', track(L, `547,712 575,718 602,700 628,680 655,668 682,640 709,614 736,601 763,592 790,589 817,574 844,554 871,547 898,531 925,523 952,514 979,517 1006,533`,
P, `340,775 358,770 376,772 394,768 412,766 430,780 448,794 466,800 484,790 502,778 520,776 538,790 556,806 574,816 588,810 640,830 697,837 715,840 727,844 741,849 749,844 757,841 768,841 780,837 842,837 848,844 857,847 867,848`,
R, `0,769 10,766 26,772 44,796 62,796 79,793 97,787 115,799 132,778 150,766 168,763 185,768 203,766 221,778 238,781 273,781 291,805 309,811 326,826 344,850 362,868 379,871 397,853 414,835 432,799 449,781 467,775 485,806 503,835 520,841 538,862 556,853 573,838 591,841 610,797 626,756 644,738 661,710 679,686 697,679 714,675 732,646 750,631 767,625 785,625 803,640 820,633 838,636 855,633 873,639 891,653 908,628 926,622 943,639 979,667 997,664 1014,688 1032,705 1050,683 1067,663 1085,646 1103,634 1120,605 1138,601 1156,595 1173,607 1191,622 1208,630 1226,648 1244,668 1261,697 1297,744 1314,742 1332,742`)) +
line('#ff0', track(L, `547,748 628,730 655,721 682,709 709,695 763,671 817,646 844,632 898,607 925,595 952,583 979,574`,
P, `340,788 376,781 412,777 448,779 484,787 520,786 556,793 588,804 700,818 840,828`,
R, `0,744 26,748 44,756 62,760 79,766 132,775 203,771 238,773 291,777 326,790 362,807 379,818 397,823 414,823 432,821 467,808 485,808 520,817 556,826 591,829 610,826 644,806 679,776 714,749 750,718 785,694 820,679 855,667 908,658 943,649 1014,658 1032,667 1067,667 1103,661 1138,646 1156,637 1208,631 1244,637 1261,647 1297,671 1332,688`)));

mount('cci', '178 884 1495 119', hgrid([922.5, 947.5, 972.5], '#c01818') +
line('#f0f0f0', track(L, `547,1119 575,1138 602,1119 628,1081 655,1078 682,1048 709,1016 736,1012 763,1006 790,1003 817,982 844,952 871,955 898,949 925,925 952,919 979,922 1006,946`,
P, `340,911 352,901 370,902 388,906 406,908 420,904 432,918 448,929 470,932 490,930 505,928 520,912 529,924 540,930 556,932 575,931 600,928 622,922 640,921 655,924 670,931 680,927 692,940 706,958 720,962 745,955 765,950 785,952 800,944 812,952 825,975 845,984 862,978 870,984`,
R, `0,1187 10,1174 26,1184 44,1228 62,1213 79,1201 97,1192 115,1210 132,1183 150,1165 168,1171 185,1174 238,1192 256,1183 273,1180 291,1204 309,1204 326,1201 344,1222 379,1225 397,1198 414,1180 432,1165 449,1156 467,1159 485,1189 503,1204 520,1201 538,1210 556,1201 573,1177 591,1180 610,1162 626,1135 661,1123 679,1111 714,1111 732,1093 750,1078 785,1081 803,1087 838,1069 855,1072 891,1069 908,1039 926,1030 943,1048 979,1070 997,1060 1014,1072 1032,1089 1050,1048 1067,1018 1085,1003 1103,993 1120,955 1138,964 1156,958 1173,973 1191,982 1208,994 1226,982 1244,1018 1261,1048 1279,1066 1297,1075 1332,1063`)));

// Index panel: intraday price above, volume below
const sideGrid = (y0, step, n, top, bottom) => {
  let s = '';
  for (let k = 0; k < n; k++) s += seg(77, Math.round(y0 + step * k) + .5, 109, Math.round(y0 + step * k) + .5, '#800000');
  for (let k = 0; k < 7; k++) s += seg(81.5 + 4 * k, top, 81.5 + 4 * k, bottom, '#800000', k % 2 ? '' : 'stroke-dasharray="1 1"');
  return `<g shape-rendering="crispEdges">${s}${seg(109.5, top, 109.5, bottom, FRAME)}</g>`;
};
const area = (color, pts) => `<polygon points="${pts}" fill="${color}"/>`;
mount('index', '77 68 34 652', sideGrid(85, 31.75, 20, 86, 720) +
area('#ff3c3c', track(T, `235,948 236,870 238,930 241,880 244,930 247,910 250,885 252,940 256,828 258,930 262,855 264,900 267,840 271,905 275,870 277,735 279,860 282,735 285,870 288,780 290,860 292,745 295,870 298,835 301,800 303,850 305,740 307,810 309,800 312,880 314,850 317,900 319,870 322,900 325,845 328,948`)) +
area('#00e800', track(T, `235,948 235,1045 239,1000 245,1030 250,1100 254,1070 258,990 264,1040 270,1020 275,1130 280,960 285,1100 290,1000 295,1060 300,1078 305,1070 308,960 311,970 313,1090 316,960 318,1085 322,1040 326,950 328,948`)) +
line('#fff', track(T, `236,875 238,725 242,800 245,790 250,900 255,960 259,1075 264,985 269,1060 273,1130 278,1185 282,1040 287,1160 291,1095 296,1170 301,1205 305,1060 308,910 312,865 316,935 320,880 325,935`), 1.8) +
line('#ff0', track(T, `235,705 235,238 239,170 241,240 243,310 246,460 248,590 251,520 254,595 256,485 259,700 262,710 265,620 268,585 271,620 275,770 278,690 281,655 284,470 288,575 292,430 295,510 299,480 302,555 305,260 308,150 312,120 314,220 317,135 320,225 325,170`), 1.5));
mount('indexvol', '77 720 34 283', sideGrid(738, 33, 8, 720, 1003) +
area('#ff0', track(L, `234,1203 234,423 237,423 237,975 241,1010 243,1050 246,1005 249,1085 254,1090 257,1118 262,1128 265,1140 272,1140 276,1112 280,1060 283,1085 286,1120 291,1133 297,1138 300,1108 303,1040 306,1125 310,1098 314,1120 321,1115 323,1100 325,1100 325,905 328,905 328,1203`)));

// Axis labels, notes and dates sit at a share of their pane
const axes = {
  price: [68, 532, [['4000', 144], ['3900', 218], ['3800', 292], ['3700', 366], ['3600', 440], ['3500', 514]]],
  vol: [600, 145, [['200万', 643], ['100万', 693]]],
  macd: [745, 139, [['80', 779], ['0', 823]]],
  cci: [886, 117, [['100', 923], ['0', 948], ['-100', 973]]],
  index: [68, 652, Array.from({ length: 20 }, (_, k) => [(3105.195 - 5.64 * k - (k ? .001 : 0)).toFixed(3), 88 + 31.75 * k, k > 10 ? 'g' : k === 10 ? 'w' : ''])],
  indexvol: [722, 283, [11378447, 9956142, 8533836, 7111530, 5689224, 4266918, 2844612, 1422306].map((v, k) => [v, 741 + 33 * k])]
};
document.querySelectorAll('[data-axis]').forEach(el => {
  const [top, h, items] = axes[el.dataset.axis];
  el.innerHTML = items.map(([t, y, c]) => `<span class="${c || ''}" style="top:${((y - top) / h * 100).toFixed(2)}%">${t}</span>`).join('');
});
const share = x => ((x - 178) / 1495 * 100).toFixed(2);
document.getElementById('price').insertAdjacentHTML('beforeend', [['3745', 178, 315, 'box'], ['3599', 178, 423, 'box'], ['3389', 178, 579, 'box'], ['38.20% 3713', 181, 362, ''], ['4062', 465, 97, 'strong'], ['3408', 1122, 582, 'strong']]
  .map(([t, x, y, c]) => `<span class="note ${c}" style="left:${share(x)}%;top:${((y - 68) / 532 * 100).toFixed(2)}%">${t}</span>`).join(''));
document.getElementById('dates').innerHTML = [['202310', 179], ['11', 248], ['12', 445], ['202401', 622], ['02', 832], ['03', 968], ['04', 1156], ['05', 1337], ['06', 1517]]
  .map(([t, x]) => `<span style="left:${share(x)}%">${t}</span>`).join('');

const glyphs = {
  l: '<path d="M3 7l4-4v2h6v4H7v2z"/>', r: '<path d="M13 7L9 3v2H3v4h6v2z"/>',
  s: '<path d="M0 9h10M10 1v12M12 4h2M12 7h2M12 10h2"/>', m: '<rect x="3.500" y="3.500" width="9" height="7"/><path d="M3 4.500h10"/>'
};
document.querySelectorAll('[data-boxes]').forEach(el => {
  el.innerHTML = [...el.dataset.boxes].map(k => `<svg width="16" height="14" viewBox="0 0 16 14" fill="none" stroke="#6fb0ff"><rect x=".5" y=".5" width="15" height="13"/>${glyphs[k]}</svg>`).join('');
});

// Time, price, size, open-interest change, nature (k = 空平, d = 多平, o = 多开), size colour
document.getElementById('trades').innerHTML = `14:55 3654 1088 -612 d g|:19 3656 692 -83 k r|:20 3655 596 -543 d g|:23 3656 536 -193 d g|:24 3657 761 -62 d g|:26 3657 695 -570 d g|:30 3659 612 -491 k r|:32 3660 830 -328 k r|:33 3659 570 -196 d g|:34 3659 961 -385 d g|:34 3660 1296 -74 k r|:58 3658 618 -310 d g|14:56 3658 621 +145 o r|:13 3658 612 -271 d g|:50 3660 701 -160 k r|:51 3660 565 -185 d g|14:57 3663 545 +29 o r|14:58 3659 656 -398 d g|:29 3658 664 -544 d g|14:59 3658 521 -171 d g|:20 3656 1048 -639 d g|:33 3656 521 -274 d g|:46 3657 805 +273 o r`
  .split('|').map(s => {
    const [t, p, v, d, n, c] = s.split(' ');
    return `<tr class="${t[0] === ':' ? 'sec' : ''}"><td>${t}</td><td class="r">${p}</td><td class="${c}">${v}</td><td class="y">${d}</td><td class="${c}">${{ k: '空平', d: '多平', o: '多开' }[n]}</td></tr>`;
  }).join('');
```
